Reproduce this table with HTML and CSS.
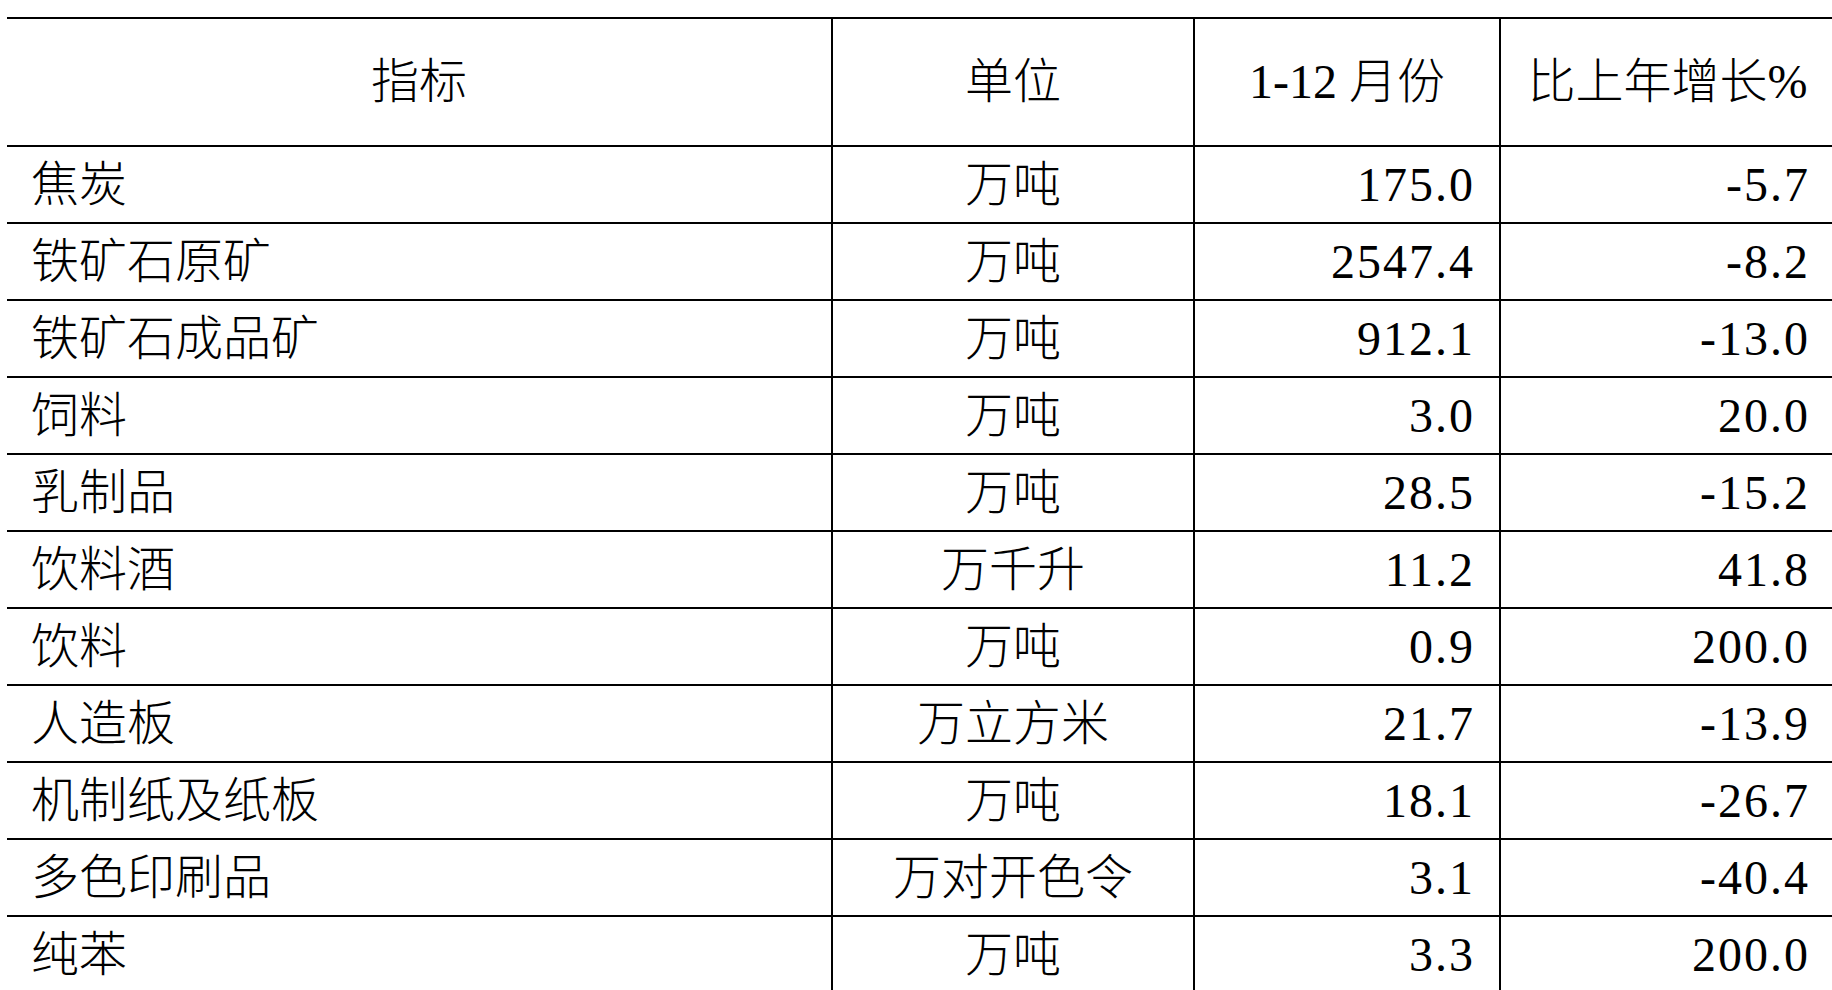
FILE: index.html
```html
<!DOCTYPE html>
<html lang="zh-CN">
<head>
<meta charset="utf-8">
<title>主要工业产品产量</title>
<link rel="stylesheet" href="styles.css">
</head>
<body>
<table class="data">
  <colgroup>
    <col class="c-name">
    <col class="c-unit">
    <col class="c-val">
    <col class="c-grow">
  </colgroup>
  <thead>
    <tr class="head">
      <th>指标</th>
      <th>单位</th>
      <th>1-12 月份</th>
      <th>比上年增长%</th>
    </tr>
  </thead>
  <tbody>
    <tr><td class="name">焦炭</td><td class="unit">万吨</td><td class="num">175.0</td><td class="num">-5.7</td></tr>
    <tr><td class="name">铁矿石原矿</td><td class="unit">万吨</td><td class="num">2547.4</td><td class="num">-8.2</td></tr>
    <tr><td class="name">铁矿石成品矿</td><td class="unit">万吨</td><td class="num">912.1</td><td class="num">-13.0</td></tr>
    <tr><td class="name">饲料</td><td class="unit">万吨</td><td class="num">3.0</td><td class="num">20.0</td></tr>
    <tr><td class="name">乳制品</td><td class="unit">万吨</td><td class="num">28.5</td><td class="num">-15.2</td></tr>
    <tr><td class="name">饮料酒</td><td class="unit">万千升</td><td class="num">11.2</td><td class="num">41.8</td></tr>
    <tr><td class="name">饮料</td><td class="unit">万吨</td><td class="num">0.9</td><td class="num">200.0</td></tr>
    <tr><td class="name">人造板</td><td class="unit">万立方米</td><td class="num">21.7</td><td class="num">-13.9</td></tr>
    <tr><td class="name">机制纸及纸板</td><td class="unit">万吨</td><td class="num">18.1</td><td class="num">-26.7</td></tr>
    <tr><td class="name">多色印刷品</td><td class="unit">万对开色令</td><td class="num">3.1</td><td class="num">-40.4</td></tr>
    <tr><td class="name">纯苯</td><td class="unit">万吨</td><td class="num">3.3</td><td class="num">200.0</td></tr>
  </tbody>
</table>
</body>
</html>
```

FILE: styles.css
```css
html, body {
  overflow: hidden;
  background: #ffffff;
}

body {
  margin: 17px 0 0 7px;
  font-family: "Liberation Serif", "Noto Sans CJK SC", serif;
  color: #000000;
}

.data {
  border-collapse: collapse;
  table-layout: fixed;
  width: 1827px;
  font-size: 48px;
  line-height: 1;
}

.c-name { width: 825px; }
.c-unit { width: 362px; }
.c-val  { width: 306px; }
.c-grow { width: 334px; }

.data th,
.data td {
  border: 2px solid #000000;
  padding: 0 24px;
  white-space: nowrap;
  font-weight: 300;
  vertical-align: middle;
}

.data tr > :first-child {
  border-left: none;
}

.data tr > :last-child {
  border-right: none;
}

.head {
  height: 128px;
}

.head th {
  text-align: center;
}

.data tbody tr {
  height: 77px;
}

.name {
  text-align: left;
  padding-left: 25px;
}

.unit {
  text-align: center;
}

.num {
  text-align: right;
  letter-spacing: 2px;
  padding-right: 20px;
}
```
